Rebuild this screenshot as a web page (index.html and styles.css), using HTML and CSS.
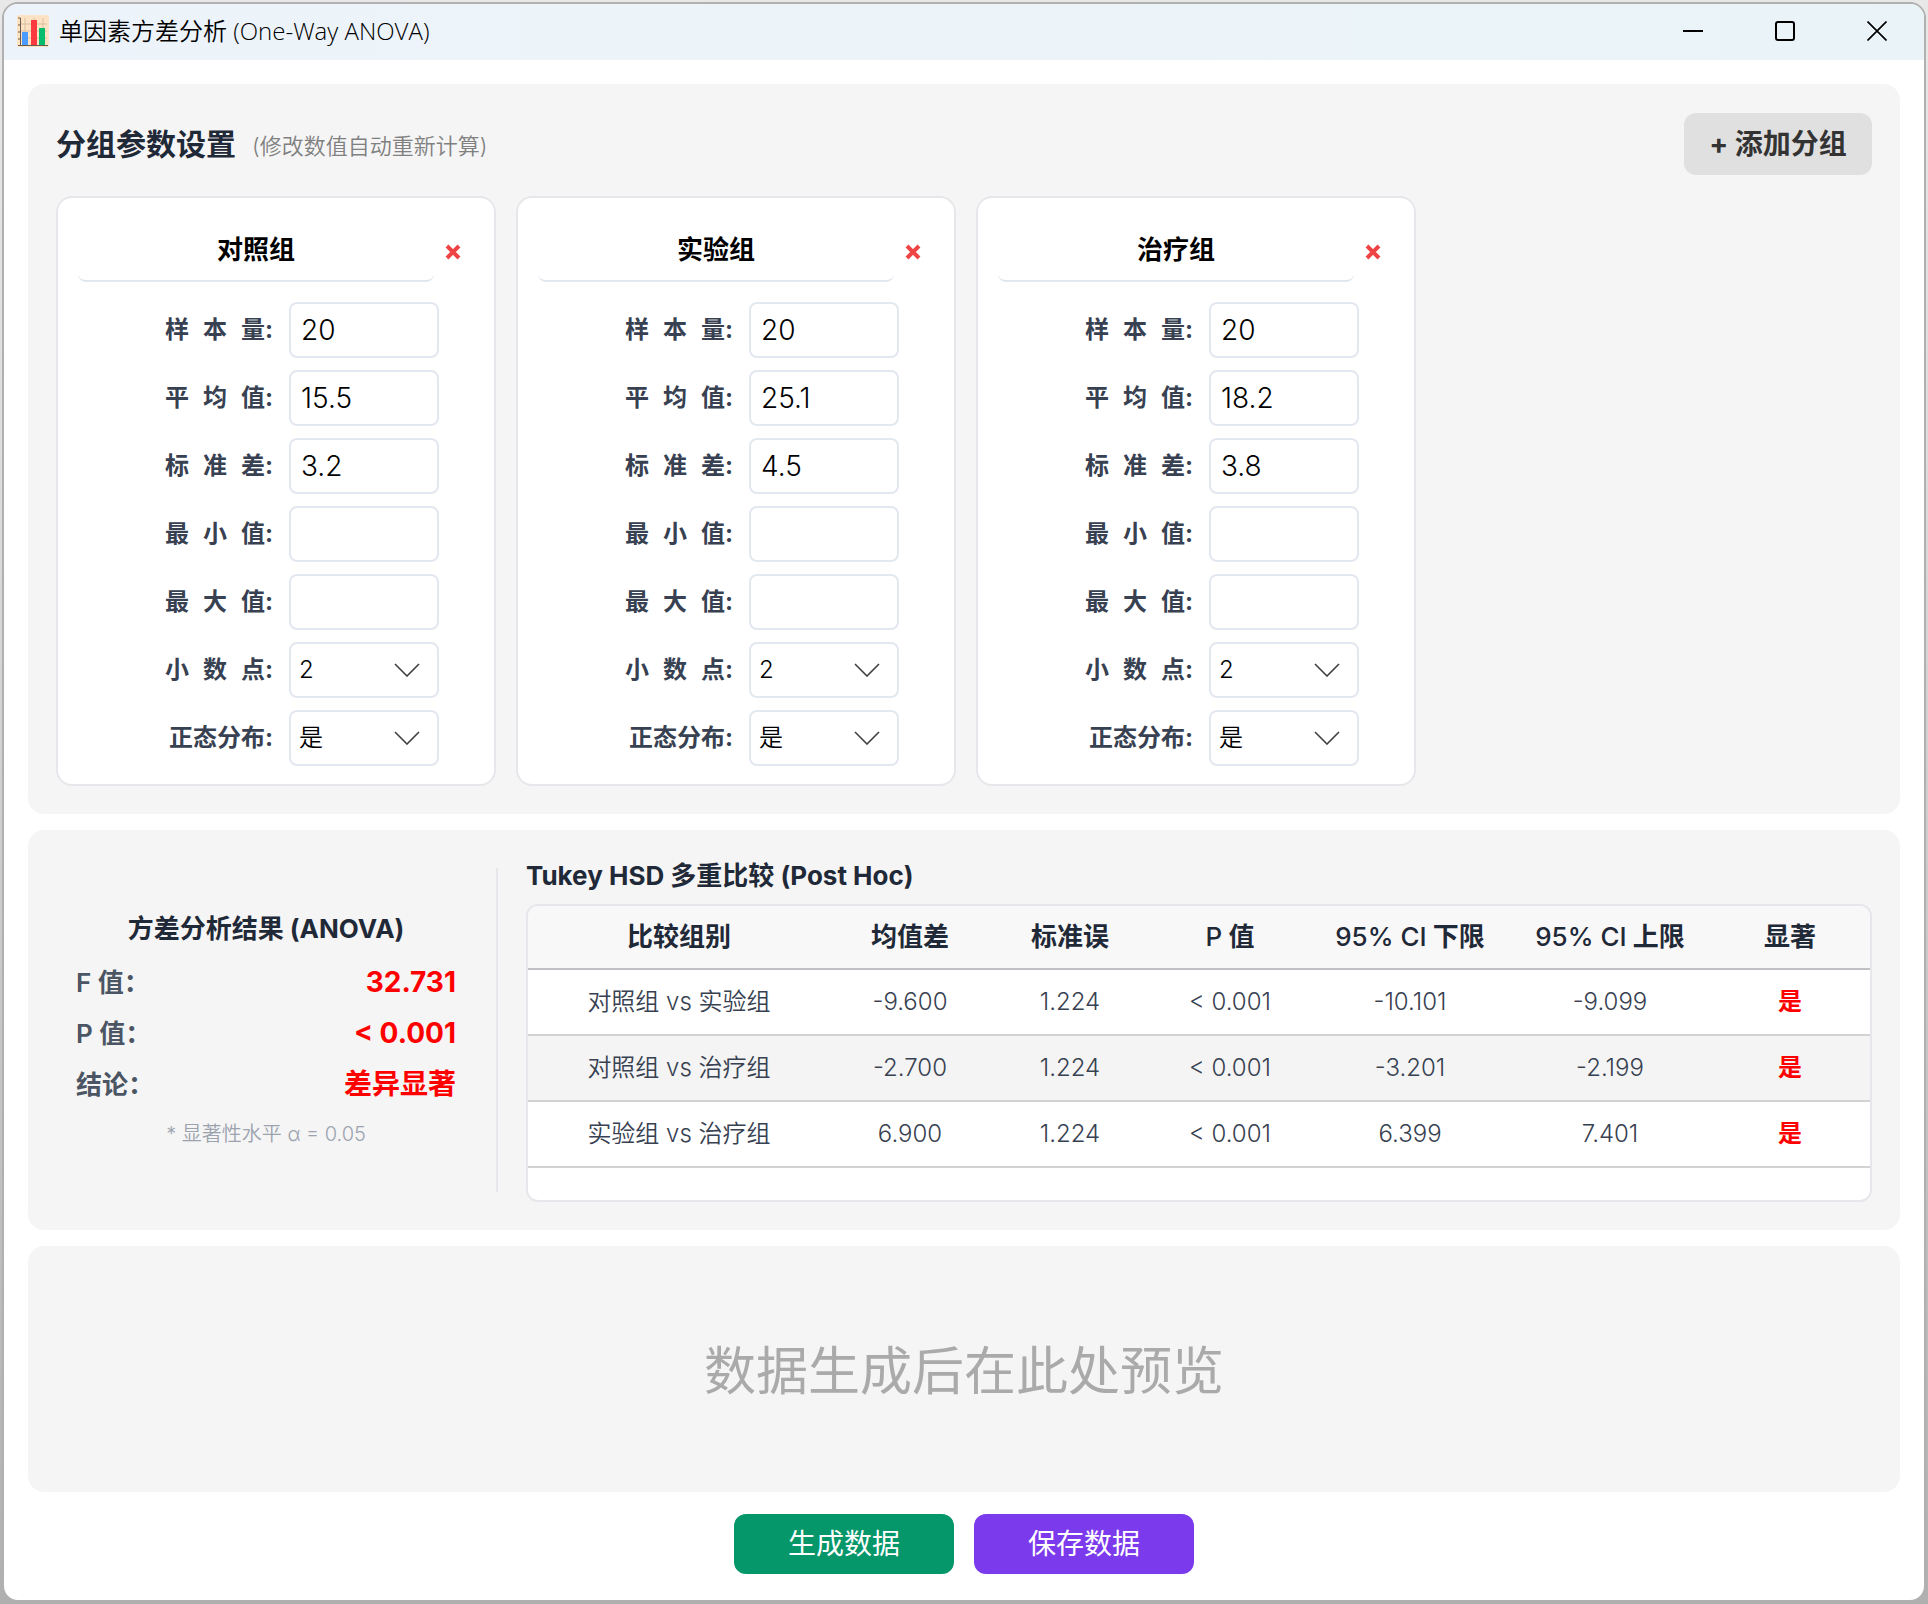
FILE: index.html
```html
<!DOCTYPE html>
<html lang="zh-CN">
<head>
<meta charset="utf-8">
<title>单因素方差分析 (One-Way ANOVA)</title>
<link rel="stylesheet" href="styles.css">
</head>
<body>
<svg class="sprite" aria-hidden="true">
  <symbol id="chevron" viewBox="0 0 26 14"><path d="M1 1l12 12L25 1" fill="none" stroke="#404040" stroke-width="1.6"/></symbol>
  <symbol id="cross" viewBox="0 0 16 16"><path d="M2 2l12 12M14 2L2 14" fill="none" stroke="#ef4444" stroke-width="4"/></symbol>
</svg>
<div class="window">
  <header class="titlebar">
    <svg class="app-icon" viewBox="0 0 32 32" aria-hidden="true">
      <rect width="32" height="32" rx="2" fill="#fde2c4"/>
      <path d="M8 3v27M17 3v27M26 3v27M3 9h27M3 16h27M3 23h27" stroke="#d9c0a4" stroke-width="1"/>
      <path d="M1 3h2.500v27.500M1 10h2M1 17h2M1 24h2M1 30.500h30" fill="none" stroke="#6b5b4d" stroke-width="1"/>
      <rect x="5" y="17" width="6" height="13" fill="#4a9bff"/>
      <rect x="14" y="5" width="6" height="25" fill="#fa3a3e"/>
      <rect x="22" y="13" width="6" height="17" fill="#05bd6c"/>
    </svg>
    <h1 class="window-title">单因素方差分析 (One-Way ANOVA)</h1>
    <div class="window-controls">
      <button type="button" class="control" aria-label="最小化"><svg viewBox="0 0 20 20"><path d="M0 10h20" stroke="#000" stroke-width="2"/></svg></button>
      <button type="button" class="control" aria-label="最大化"><svg viewBox="0 0 20 20"><rect x="1" y="1" width="18" height="18" rx="2" fill="none" stroke="#000" stroke-width="2"/></svg></button>
      <button type="button" class="control" aria-label="关闭"><svg viewBox="0 0 20 20"><path d="M0.500 0.500l19 19M19.500 0.500l-19 19" stroke="#000" stroke-width="1.700"/></svg></button>
    </div>
  </header>

  <main class="content">
    <section class="panel">
      <div class="panel-head">
        <h2 class="panel-title">分组参数设置</h2>
        <span class="panel-hint">(修改数值自动重新计算)</span>
        <button type="button" class="add-button">+ 添加分组</button>
      </div>
      <div class="groups">
        <article class="group">
          <div class="group-head">
            <input class="group-name" type="text" aria-label="组名" value="对照组">
            <button type="button" class="remove" aria-label="删除对照组"><svg viewBox="0 0 16 16"><use href="#cross"/></svg></button>
          </div>
          <div class="field"><label for="n1">样&emsp13;&emsp14;本&emsp13;&emsp14;量:</label><input id="n1" type="text" value="20"></div>
          <div class="field"><label for="m1">平&emsp13;&emsp14;均&emsp13;&emsp14;值:</label><input id="m1" type="text" value="15.5"></div>
          <div class="field"><label for="s1">标&emsp13;&emsp14;准&emsp13;&emsp14;差:</label><input id="s1" type="text" value="3.2"></div>
          <div class="field"><label for="lo1">最&emsp13;&emsp14;小&emsp13;&emsp14;值:</label><input id="lo1" type="text"></div>
          <div class="field"><label for="hi1">最&emsp13;&emsp14;大&emsp13;&emsp14;值:</label><input id="hi1" type="text"></div>
          <div class="field"><label for="d1">小&emsp13;&emsp14;数&emsp13;&emsp14;点:</label><span class="picker"><select id="d1"><option>0</option><option>1</option><option selected>2</option><option>3</option></select><svg><use href="#chevron"/></svg></span></div>
          <div class="field"><label for="z1">正态分布:</label><span class="picker"><select id="z1"><option selected>是</option><option>否</option></select><svg><use href="#chevron"/></svg></span></div>
        </article>
        <article class="group">
          <div class="group-head">
            <input class="group-name" type="text" aria-label="组名" value="实验组">
            <button type="button" class="remove" aria-label="删除实验组"><svg viewBox="0 0 16 16"><use href="#cross"/></svg></button>
          </div>
          <div class="field"><label for="n2">样&emsp13;&emsp14;本&emsp13;&emsp14;量:</label><input id="n2" type="text" value="20"></div>
          <div class="field"><label for="m2">平&emsp13;&emsp14;均&emsp13;&emsp14;值:</label><input id="m2" type="text" value="25.1"></div>
          <div class="field"><label for="s2">标&emsp13;&emsp14;准&emsp13;&emsp14;差:</label><input id="s2" type="text" value="4.5"></div>
          <div class="field"><label for="lo2">最&emsp13;&emsp14;小&emsp13;&emsp14;值:</label><input id="lo2" type="text"></div>
          <div class="field"><label for="hi2">最&emsp13;&emsp14;大&emsp13;&emsp14;值:</label><input id="hi2" type="text"></div>
          <div class="field"><label for="d2">小&emsp13;&emsp14;数&emsp13;&emsp14;点:</label><span class="picker"><select id="d2"><option>0</option><option>1</option><option selected>2</option><option>3</option></select><svg><use href="#chevron"/></svg></span></div>
          <div class="field"><label for="z2">正态分布:</label><span class="picker"><select id="z2"><option selected>是</option><option>否</option></select><svg><use href="#chevron"/></svg></span></div>
        </article>
        <article class="group">
          <div class="group-head">
            <input class="group-name" type="text" aria-label="组名" value="治疗组">
            <button type="button" class="remove" aria-label="删除治疗组"><svg viewBox="0 0 16 16"><use href="#cross"/></svg></button>
          </div>
          <div class="field"><label for="n3">样&emsp13;&emsp14;本&emsp13;&emsp14;量:</label><input id="n3" type="text" value="20"></div>
          <div class="field"><label for="m3">平&emsp13;&emsp14;均&emsp13;&emsp14;值:</label><input id="m3" type="text" value="18.2"></div>
          <div class="field"><label for="s3">标&emsp13;&emsp14;准&emsp13;&emsp14;差:</label><input id="s3" type="text" value="3.8"></div>
          <div class="field"><label for="lo3">最&emsp13;&emsp14;小&emsp13;&emsp14;值:</label><input id="lo3" type="text"></div>
          <div class="field"><label for="hi3">最&emsp13;&emsp14;大&emsp13;&emsp14;值:</label><input id="hi3" type="text"></div>
          <div class="field"><label for="d3">小&emsp13;&emsp14;数&emsp13;&emsp14;点:</label><span class="picker"><select id="d3"><option>0</option><option>1</option><option selected>2</option><option>3</option></select><svg><use href="#chevron"/></svg></span></div>
          <div class="field"><label for="z3">正态分布:</label><span class="picker"><select id="z3"><option selected>是</option><option>否</option></select><svg><use href="#chevron"/></svg></span></div>
        </article>
      </div>
    </section>

    <section class="panel results">
      <div class="anova">
        <h3 class="result-title">方差分析结果 (ANOVA)</h3>
        <dl class="stats">
          <div class="stat"><dt>F 值：</dt><dd>32.731</dd></div>
          <div class="stat"><dt>P 值：</dt><dd>&lt; 0.001</dd></div>
          <div class="stat"><dt>结论：</dt><dd>差异显著</dd></div>
        </dl>
        <p class="note">* 显著性水平 α = 0.05</p>
      </div>
      <div class="posthoc">
        <h3 class="result-title">Tukey HSD 多重比较 (Post Hoc)</h3>
        <div class="table-box">
          <table>
            <colgroup><col><col class="narrow"><col class="narrow"><col class="narrow"><col class="wide"><col class="wide"><col class="narrow"></colgroup>
            <thead>
              <tr><th scope="col">比较组别</th><th scope="col">均值差</th><th scope="col">标准误</th><th scope="col"><span class="latin">P</span> 值</th><th scope="col"><span class="latin">95% CI</span> 下限</th><th scope="col"><span class="latin">95% CI</span> 上限</th><th scope="col">显著</th></tr>
            </thead>
            <tbody>
              <tr><td>对照组 vs 实验组</td><td>-9.600</td><td>1.224</td><td>&lt; 0.001</td><td>-10.101</td><td>-9.099</td><td class="significant">是</td></tr>
              <tr><td>对照组 vs 治疗组</td><td>-2.700</td><td>1.224</td><td>&lt; 0.001</td><td>-3.201</td><td>-2.199</td><td class="significant">是</td></tr>
              <tr><td>实验组 vs 治疗组</td><td>6.900</td><td>1.224</td><td>&lt; 0.001</td><td>6.399</td><td>7.401</td><td class="significant">是</td></tr>
            </tbody>
          </table>
        </div>
      </div>
    </section>

    <section class="panel preview">
      <p>数据生成后在此处预览</p>
    </section>

    <footer class="actions">
      <button type="button" class="action generate">生成数据</button>
      <button type="button" class="action save">保存数据</button>
    </footer>
  </main>
</div>
</body>
</html>
```
FILE: styles.css
```css
* {
  box-sizing: border-box;
}

body {
  margin: 0;
  min-height: 100vh;
  padding: 2px;
  display: flex;
  background: linear-gradient(#e8e8e8, #dcdcdc 30%, #b0b0b0);
  font-family: Inter, "Noto Sans CJK SC", sans-serif;
  font-size: 24px;
  font-weight: 350;
  line-height: 32px;
  color: #000;
}

h1, h2, h3, p, dl, dd {
  margin: 0;
}

button, input, select {
  font: inherit;
  color: inherit;
}

button {
  border: 0;
  padding: 0;
  cursor: pointer;
}

.sprite {
  position: absolute;
  width: 0;
  height: 0;
}

.window {
  flex: 1;
  min-width: 0;
  display: flex;
  flex-direction: column;
  border: 2px solid #b0b0b0;
  border-radius: 16px;
  background: #fff;
  overflow: hidden;
}

/* Title bar */
.titlebar {
  height: 56px;
  display: flex;
  align-items: center;
  padding: 0 1px 2px 13px;
  gap: 10px;
  background: linear-gradient(90deg, #edf3fa, #eaf4f8);
}

.app-icon {
  width: 32px;
  height: 32px;
}

.window-title {
  font-family: "Open Sans", "Noto Sans CJK SC", sans-serif;
  font-size: 24px;
  font-weight: 350;
}

.window-controls {
  margin-left: auto;
  align-self: stretch;
  display: flex;
}

.control {
  width: 92px;
  display: grid;
  place-items: center;
  background: none;
}

.control svg {
  width: 20px;
  height: 20px;
}

/* Panels */
.content {
  flex: 1;
  display: flex;
  flex-direction: column;
  gap: 16px;
  padding: 24px 24px 26px;
}

.panel {
  padding: 28px;
  border-radius: 16px;
  background: #f5f5f5;
}

.panel-head {
  display: flex;
  align-items: center;
  gap: 16px;
  padding-top: 1px;
  margin-bottom: 21px;
}

.panel-title {
  font-size: 30px;
  line-height: 40px;
  color: #1f2937;
}

.panel-hint {
  font-size: 22px;
  padding-top: 4px;
  color: #808080;
}

.add-button {
  margin-left: auto;
  width: 188px;
  height: 62px;
  border-radius: 12px;
  background: #e0e0e0;
  color: #333;
  font-size: 28px;
  font-weight: 700;
}

/* Group cards */
.groups {
  display: flex;
  flex-wrap: wrap;
  gap: 20px;
}

.group {
  width: 440px;
  display: flex;
  flex-direction: column;
  gap: 12px;
  padding: 20px 20px 18px;
  border: 2px solid #e5e7eb;
  border-radius: 16px;
  background: #fff;
}

.group-head {
  display: flex;
  margin-bottom: 8px;
}

.group-name {
  flex: 1;
  min-width: 0;
  height: 64px;
  padding: 0 0 4px;
  border: 0;
  border-bottom: 2px solid #e2e8f0;
  border-radius: 8px;
  background: none;
  font-size: 26px;
  font-weight: 700;
  text-align: center;
}

.remove {
  width: 40px;
  padding: 4px 2px 0 0;
  display: grid;
  place-items: center;
  background: none;
}

.remove svg {
  width: 16px;
  height: 16px;
}

.field {
  display: flex;
  align-items: center;
  justify-content: flex-end;
  gap: 16px;
  padding-right: 35px;
}

.field label {
  font-weight: 700;
  color: #374151;
}

.field input,
.picker {
  width: 150px;
  height: 56px;
  border: 2px solid #e2e8f0;
  border-radius: 8px;
  background: #fff;
}

.field input {
  padding: 0 10px;
  font-size: 28px;
}

.picker {
  display: grid;
  grid-template-columns: 1fr 26px 17px;
  align-items: center;
}

.picker select {
  grid-area: 1 / 1 / 2 / 4;
  height: 52px;
  padding: 0 8px;
  border: 0;
  appearance: none;
  background: none;
}

.picker svg {
  grid-area: 1 / 2;
  width: 26px;
  height: 14px;
  pointer-events: none;
}

/* Results */
.results {
  display: flex;
}

.anova {
  width: 442px;
  margin: 10px 28px 10px 0;
  padding: 0 40px 0 20px;
  display: flex;
  flex-direction: column;
  justify-content: center;
  border-right: 2px solid #e5e7eb;
}

.result-title {
  font-size: 26px;
  font-weight: 700;
  line-height: 36px;
  color: #1f2937;
}

.anova .result-title {
  text-align: center;
}

.stats {
  padding: 10px 0 8px;
}

.stat {
  display: flex;
  justify-content: space-between;
  line-height: 51px;
}

.stat dt {
  font-size: 26px;
  font-weight: 600;
  color: #4b5563;
}

.stat dd {
  font-size: 28px;
  font-weight: 700;
  color: #f00;
}

.note {
  font-size: 20px;
  text-align: center;
  color: #9ca3af;
}

.posthoc {
  flex: 1;
  min-width: 0;
  display: flex;
  flex-direction: column;
  gap: 10px;
}

.table-box {
  padding-bottom: 32px;
  border: 2px solid #e5e7eb;
  border-radius: 12px;
  background: #fff;
  overflow: hidden;
}

table {
  width: 100%;
  table-layout: fixed;
  border-collapse: separate;
  border-spacing: 0;
  text-align: center;
}

.narrow {
  width: 160px;
}

.wide {
  width: 200px;
}

th {
  height: 64px;
  padding: 0;
  border-bottom: 2px solid #c0c0c5;
  background: #f8f8f8;
  font-size: 26px;
  font-weight: 700;
  color: #1f2937;
}

.latin {
  font-weight: 500;
}

td {
  height: 66px;
  padding: 0;
  border-bottom: 2px solid #d2d2d4;
  color: #374151;
}

tbody tr:nth-child(even) td {
  background: #f4f4f4;
}

td.significant {
  font-weight: 700;
  color: #f00;
}

/* Preview and actions */
.preview {
  flex: 1;
  display: grid;
  place-items: center;
  padding-top: 34px;
  font-size: 52px;
  font-weight: 400;
  line-height: 72px;
  color: #aaa;
}

.actions {
  display: flex;
  justify-content: center;
  gap: 20px;
  padding-top: 6px;
}

.action {
  width: 220px;
  height: 60px;
  border-radius: 12px;
  color: #fff;
  font-size: 28px;
  font-weight: 400;
}

.generate {
  background: #059669;
}

.save {
  background: #7c3aed;
}
```
